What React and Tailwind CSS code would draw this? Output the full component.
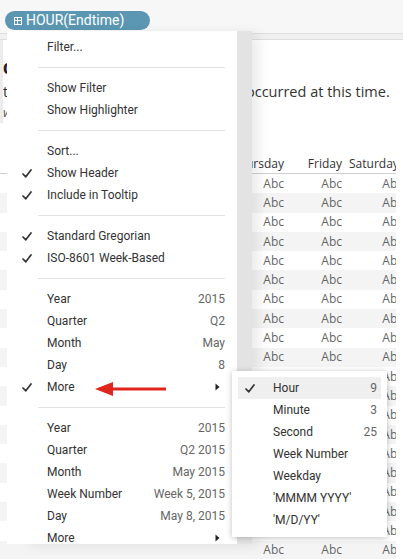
import React from "react";

const font = { fontFamily: "Roboto, 'Liberation Sans', sans-serif" };

function Check({ className = "" }) {
  return (
    <svg width="10" height="9" viewBox="0 0 10 9" className={className}>
      <path d="M1 5 L3.8 7.8 L9 1" fill="none" stroke="#333" strokeWidth="1.7" strokeLinecap="round" strokeLinejoin="round" />
    </svg>
  );
}

function Caret() {
  return (
    <svg width="5" height="8" viewBox="0 0 5 8" className="mr-[5px]">
      <path d="M0.5 0.5 L4.5 4 L0.5 7.5 Z" fill="#222" />
    </svg>
  );
}

function Item({ label, value, checked, more }) {
  return (
    <div className="relative flex h-[22px] items-center pl-[40px] pr-[12px]">
      {checked && <Check className="absolute left-[15px] top-[7px]" />}
      <span className="flex-1 text-[#333]">{label}</span>
      {value && <span className="text-[#666]">{value}</span>}
      {more && <Caret />}
    </div>
  );
}

function Sep() {
  return (
    <div className="flex h-[19px] items-center pl-[31px] pr-[12px]">
      <div className="h-px w-full bg-[#e3e3e3]"></div>
    </div>
  );
}

function SubItem({ label, value, checked, active }) {
  return (
    <div className={"relative mx-[6px] flex h-[22px] items-center pl-[35px] pr-[4px] " + (active ? "bg-[#efefef]" : "")}>
      {checked && <Check className="absolute left-[7px] top-[7px]" />}
      <span className="flex-1 text-[#333]">{label}</span>
      {value && <span className="text-[#666]">{value}</span>}
    </div>
  );
}

const rows = Array.from({ length: 20 });

export default function App() {
  return (
    <div className="relative h-[559px] w-[403px] overflow-hidden bg-white" style={font}>
      {/* top shelf */}
      <div className="h-[33px] bg-[#f7f7f7]"></div>
      <div className="h-[7px] border-y border-[#dedede] bg-[#f1f1f1]"></div>

      {/* dashboard behind the menu */}
      <div className="flex">
        <div className="w-[3px] self-stretch bg-[#ececec]"></div>
        <div className="flex-1">
          <div className="mt-[16px] h-[22px] text-[20px] font-bold leading-[22px] text-[#222]">d</div>
          <div className="mt-[4px] flex h-[20px] items-center text-[14.5px] text-[#333]" style={{ fontFamily: "'Open Sans', sans-serif" }}>
            <span className="w-[243px] overflow-hidden whitespace-nowrap">t</span>
            <span className="whitespace-nowrap">occurred at this time.</span>
          </div>
          <div className="mt-[1px] h-[20px] text-[13px] italic text-[#555]" style={{ fontFamily: "'Open Sans', sans-serif" }}>wh</div>
        </div>
      </div>

      <div className="mt-[31px] w-[396px] overflow-hidden text-[12px]" style={{ fontFamily: "'Open Sans', sans-serif" }}>
        <div className="flex h-[20px] w-[410px] items-center border-b border-[#cfcfcf] text-[#333]">
          <span className="w-[226px]"></span>
          <span className="w-[58px] text-right">Thursday</span>
          <span className="w-[58px] text-right">Friday</span>
          <span className="w-[60px] whitespace-nowrap pl-[7px]">Saturday</span>
        </div>
        {rows.map((_, i) => (
          <div key={i} className={"flex h-[19.3px] w-[410px] items-center text-[#666] " + (i % 2 === 1 ? "bg-[#f4f4f4]" : "")}>
            <span className="w-[226px]"></span>
            <span className="w-[58px] text-right">Abc</span>
            <span className="w-[58px] text-right">Abc</span>
            <span className="w-[61px] text-right">Abc</span>
          </div>
        ))}
      </div>

      {/* field pill */}
      <div className="absolute left-[5px] top-[11px] flex h-[19px] w-[145px] items-center rounded-full bg-[#5b97b2] pl-[9px] text-[14px] text-white">
        <span className="mr-[4px] flex h-[8px] w-[8px] items-center justify-center border border-white">
          <span className="relative block h-[6px] w-[6px]">
            <span className="absolute left-0 top-[2px] h-px w-[6px] bg-white"></span>
            <span className="absolute left-[2px] top-0 h-[6px] w-px bg-white"></span>
          </span>
        </span>
        HOUR(Endtime)
      </div>

      {/* context menu */}
      <div className="absolute left-[7px] top-[31px] h-[513px] w-[230px] overflow-hidden bg-white pt-[5px] text-[12px] shadow-[15px_0_0_#e3e3e3,22px_2px_12px_rgba(0,0,0,0.08)]">
        <Item label="Filter..." />
        <Sep />
        <Item label="Show Filter" />
        <Item label="Show Highlighter" />
        <Sep />
        <Item label="Sort..." />
        <Item label="Show Header" checked />
        <Item label="Include in Tooltip" checked />
        <Sep />
        <Item label="Standard Gregorian" checked />
        <Item label="ISO-8601 Week-Based" checked />
        <Sep />
        <Item label="Year" value="2015" />
        <Item label="Quarter" value="Q2" />
        <Item label="Month" value="May" />
        <Item label="Day" value="8" />
        <Item label="More" checked more />
        <Sep />
        <Item label="Year" value="2015" />
        <Item label="Quarter" value="Q2 2015" />
        <Item label="Month" value="May 2015" />
        <Item label="Week Number" value="Week 5, 2015" />
        <Item label="Day" value="May 8, 2015" />
        <Item label="More" more />
      </div>

      {/* red arrow annotation */}
      <svg className="absolute left-[94px] top-[381px]" width="74" height="16" viewBox="0 0 74 16">
        <path d="M1 8 L19 1 L19 6.5 L72 6.5 L72 9.5 L19 9.5 L19 15 Z" fill="#e0251d" />
      </svg>

      {/* submenu */}
      <div className="absolute left-[232px] top-[371px] w-[155px] bg-white py-[6px] text-[12px] shadow-[0_1px_6px_rgba(0,0,0,0.25)]">
        <SubItem label="Hour" value="9" checked active />
        <SubItem label="Minute" value="3" />
        <SubItem label="Second" value="25" />
        <SubItem label="Week Number" />
        <SubItem label="Weekday" />
        <SubItem label="'MMMM YYYY'" />
        <SubItem label="'M/D/YY'" />
      </div>
    </div>
  );
}
